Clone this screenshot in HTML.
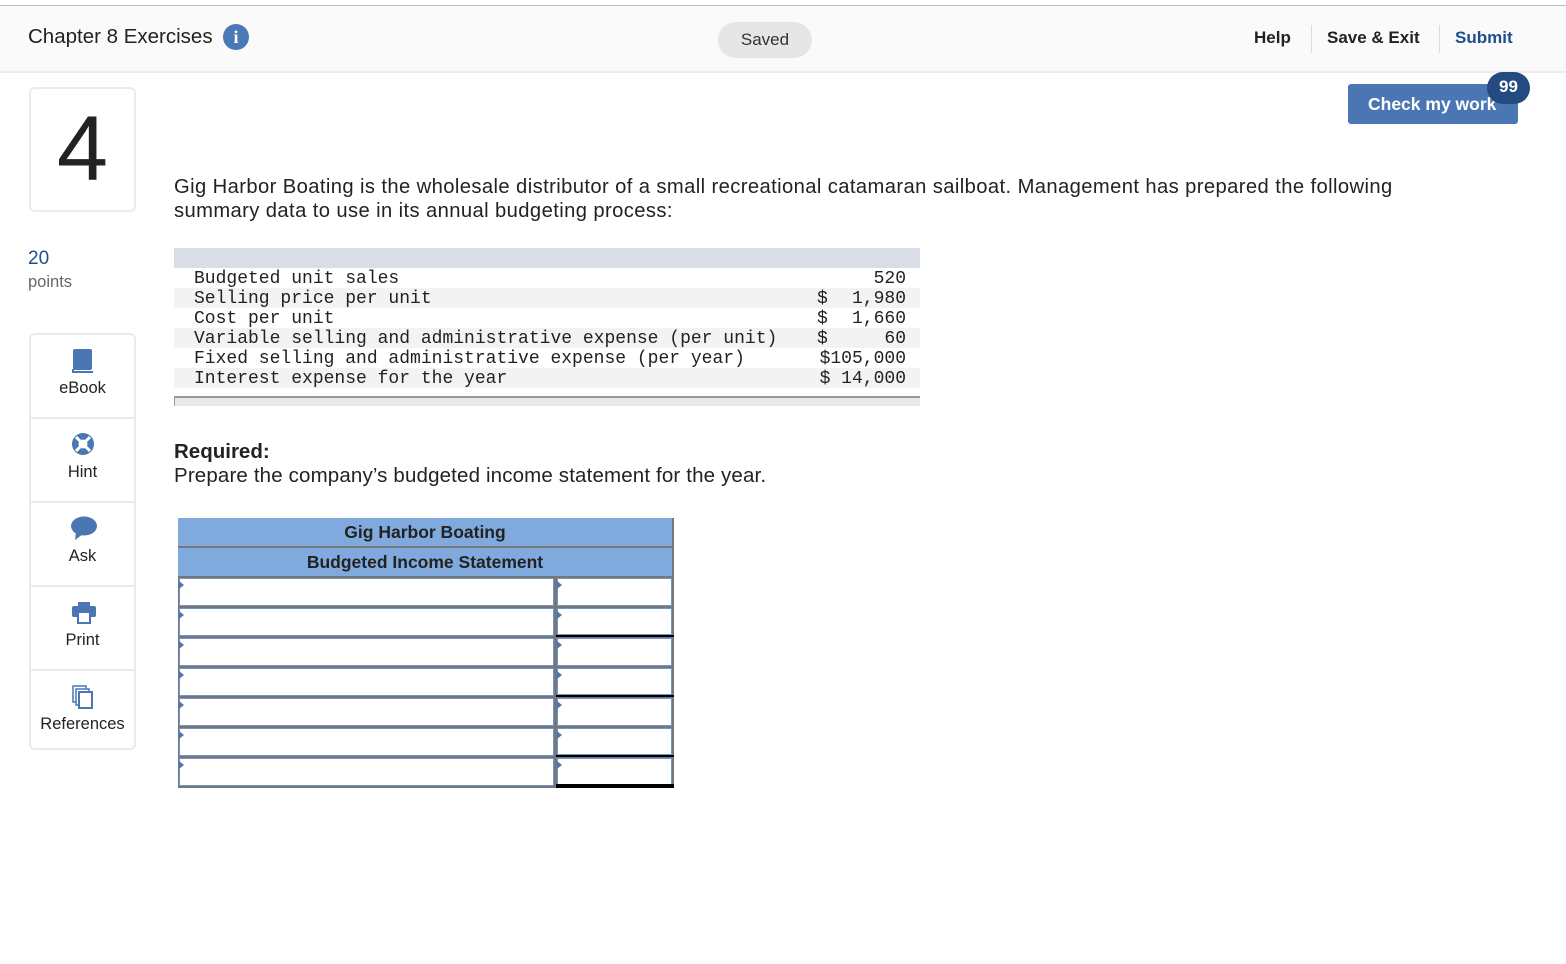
<!DOCTYPE html>
<html><head><style>
*{margin:0;padding:0;box-sizing:border-box}
body{width:1566px;height:964px;background:#fff;font-family:"Liberation Sans",sans-serif;position:relative;overflow:hidden;color:#222}
.a{position:absolute}
.hdr{left:0;top:5px;width:1566px;height:68px;background:#fafafa;border-top:1px solid #bbb;border-bottom:2px solid #ececec}
.nav{font-weight:bold;font-size:17px;top:28px}
.sep{width:1px;height:28px;background:#ddd;top:25px}
.side{left:29px;top:333px;width:107px;height:417px;border:2px solid #eaeaea;border-radius:6px}
.it{position:absolute;left:0;width:103px;height:84px;border-bottom:2px solid #eaeaea;text-align:center;font-size:16.5px}
.it span{position:absolute;left:0;width:103px;top:44px}
.it svg{position:absolute;left:39px;top:12px}
.mono{font-family:"Liberation Mono",monospace;font-size:18px;line-height:20px}
.row{position:absolute;left:174px;width:746px;height:20px}
.row .l{position:absolute;left:20px;top:1px}
.row .d{position:absolute;left:643px;top:1px}
.row .v{position:absolute;right:14px;top:1px}
.cell{position:absolute;background:#fff;border:1px solid #6f94d0}
</style></head><body>
<div class="a hdr"></div>
<div class="a" style="left:28px;top:25px;font-size:20.5px;color:#222">Chapter 8 Exercises</div>
<div class="a" style="left:223px;top:24px;width:26px;height:26px;border-radius:50%;background:#4a79b6;color:#fff;font:bold 18px 'Liberation Serif',serif;text-align:center;line-height:26px">i</div>
<div class="a" style="left:718px;top:22px;width:94px;height:36px;border-radius:18px;background:#e6e6e6;text-align:center;line-height:36px;font-size:17px;color:#333">Saved</div>
<div class="a nav" style="left:1254px">Help</div>
<div class="a sep" style="left:1311px"></div>
<div class="a nav" style="left:1327px">Save &amp; Exit</div>
<div class="a sep" style="left:1439px"></div>
<div class="a nav" style="left:1455px;color:#1f4e8c">Submit</div>
<div class="a" style="left:1348px;top:84px;width:170px;height:40px;background:#4a77b4;border-radius:3px;color:#fff;font-weight:bold;font-size:17.5px;line-height:40px;padding-left:20px">Check my work</div>
<div class="a" style="left:1487px;top:72px;width:43px;height:32px;border-radius:16px;background:#254a80;color:#fff;font-weight:bold;font-size:17px;text-align:center;line-height:30px">99</div>

<div class="a" style="left:29px;top:87px;width:107px;height:125px;border:2px solid #ececec;border-radius:6px;text-align:center;font-size:92px;line-height:120px;color:#222">4</div>
<div class="a" style="left:28px;top:248px;font-size:19px;color:#1f4e8c">20</div>
<div class="a" style="left:28px;top:273px;font-size:16.5px;color:#666">points</div>

<div class="a side">
<div class="it" style="top:0"><svg width="26" height="28" viewBox="0 0 26 28"><rect x="3" y="2" width="19" height="21" rx="2" fill="#4a77b4"/><path d="M3 22v3h20" stroke="#4a77b4" stroke-width="2" fill="none"/></svg><span>eBook</span></div>
<div class="it" style="top:84px"><svg width="26" height="28" viewBox="0 0 26 28"><circle cx="13" cy="13" r="11" fill="#4a77b4"/><circle cx="13" cy="13" r="4.5" fill="#fff"/><path d="M6 6l4 4M20 6l-4 4M6 20l4-4M20 20l-4-4" stroke="#fff" stroke-width="3"/></svg><span>Hint</span></div>
<div class="it" style="top:168px"><svg width="28" height="28" viewBox="0 0 28 28"><ellipse cx="14" cy="11" rx="13" ry="9.5" fill="#4a77b4"/><path d="M6 17l-1 8 8-6z" fill="#4a77b4"/></svg><span>Ask</span></div>
<div class="it" style="top:252px"><svg width="28" height="28" viewBox="0 0 28 28"><rect x="8" y="3" width="12" height="4" fill="#4a77b4"/><rect x="2" y="7" width="24" height="11" rx="2" fill="#4a77b4"/><rect x="8" y="13" width="12" height="11" fill="#fff" stroke="#4a77b4" stroke-width="2"/></svg><span>Print</span></div>
<div class="it" style="top:336px;border-bottom:none"><svg width="28" height="28" viewBox="0 0 28 28"><rect x="3" y="3" width="13" height="16" fill="#fff" stroke="#4a77b4" stroke-width="1.5"/><rect x="6" y="6" width="13" height="16" fill="#fff" stroke="#4a77b4" stroke-width="1.5"/><rect x="9" y="9" width="13" height="16" fill="#fff" stroke="#4a77b4" stroke-width="2"/></svg><span>References</span></div>
</div>

<div class="a" style="left:174px;top:175px;font-size:20.2px;letter-spacing:0.4px;line-height:24px;color:#222;width:1250px">Gig Harbor Boating is the wholesale distributor of a small recreational catamaran sailboat. Management has prepared the following summary data to use in its annual budgeting process:</div>

<div class="a" style="left:174px;top:248px;width:746px;height:20px;background:#d9dde5"></div>
<div class="mono">
<div class="row" style="top:268px"><span class="l">Budgeted unit sales</span><span class="v">520</span></div>
<div class="row" style="top:288px;background:#f3f3f3"><span class="l">Selling price per unit</span><span class="d">$</span><span class="v">1,980</span></div>
<div class="row" style="top:308px"><span class="l">Cost per unit</span><span class="d">$</span><span class="v">1,660</span></div>
<div class="row" style="top:328px;background:#f3f3f3"><span class="l">Variable selling and administrative expense (per unit)</span><span class="d">$</span><span class="v">60</span></div>
<div class="row" style="top:348px"><span class="l">Fixed selling and administrative expense (per year)</span><span class="v">$105,000</span></div>
<div class="row" style="top:368px;background:#f3f3f3"><span class="l">Interest expense for the year</span><span class="v">$ 14,000</span></div>
</div>
<div class="a" style="left:174px;top:396px;width:746px;height:10px;background:#e8e9ec;border-top:2px solid #999;border-left:1px solid #999"></div>

<div class="a" style="left:174px;top:440px;font-size:20.5px;font-weight:bold">Required:</div>
<div class="a" style="left:174px;top:464px;font-size:20.5px;letter-spacing:0.15px">Prepare the company’s budgeted income statement for the year.</div>

<div class="a" style="left:178px;top:518px;width:496px;height:270px;background:#777"></div>
<div class="a" style="left:178px;top:518px;width:494px;height:28px;background:#80aade;text-align:center;font-weight:bold;font-size:17.5px;line-height:28px;color:#222">Gig Harbor Boating</div>
<div class="a" style="left:178px;top:548px;width:494px;height:28px;background:#80aade;text-align:center;font-weight:bold;font-size:17.5px;line-height:28px;color:#222">Budgeted Income Statement</div>
<div id="cells"></div>
<script>
var h='';for(var i=0;i<7;i++){var y=578+i*30;
h+='<div class="cell" style="left:179px;top:'+y+'px;width:375px;height:28px"></div>';
h+='<div class="cell" style="left:557px;top:'+y+'px;width:115px;height:'+(i==1||i==3||i==5?27:28)+'px"></div>';
h+='<div class="a" style="left:179px;top:'+(y+3)+'px;width:0;height:0;border-left:5px solid #4a77b4;border-top:4px solid transparent;border-bottom:4px solid transparent"></div>';
h+='<div class="a" style="left:557px;top:'+(y+3)+'px;width:0;height:0;border-left:5px solid #4a77b4;border-top:4px solid transparent;border-bottom:4px solid transparent"></div>';
if(i==1||i==3||i==5)h+='<div class="a" style="left:556px;top:'+(y+27)+'px;width:118px;height:2px;background:#000"></div>';}
h+='<div class="a" style="left:556px;top:784px;width:118px;height:4px;background:#000"></div>';
document.getElementById('cells').innerHTML=h;
</script>
</body></html>
